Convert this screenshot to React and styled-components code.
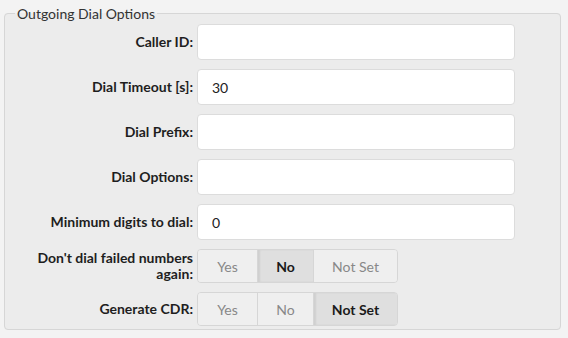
import React from "react";
import styled, { createGlobalStyle } from "styled-components";

const Global = createGlobalStyle`
  html, body { margin: 0; padding: 0; background: #f3f3f3; }
  body { font-family: Lato, "Open Sans", Arial, sans-serif; font-size: 14px; color: #222; }
  * { box-sizing: border-box; }
`;

const Page = styled.div`
  padding: 5px 7px 0 4px;
  width: 568px;
  height: 338px;
`;

const Fieldset = styled.fieldset`
  margin: 0;
  width: 557px;
  padding: 2px 0 3px 10px;
  border: 1px solid #d6d6d6;
  border-radius: 4px;
  background: #ececec;
`;

const Legend = styled.legend`
  padding: 0 2px;
  font-size: 14px;
  line-height: 17px;
  color: #333;
`;

const Grid = styled.div`
  display: grid;
  grid-template-columns: 178px 318px;
  column-gap: 4px;
  row-gap: 9px;
  align-items: center;
`;

const Label = styled.label`
  text-align: right;
  font-weight: 700;
  font-size: 14px;
  line-height: 16px;
  color: #1e1e1e;
`;

const Input = styled.input`
  width: 318px;
  height: 36px;
  border: 1px solid #dcdcdc;
  border-radius: 4px;
  background: #fff;
  padding: 0 14px;
  font-family: inherit;
  font-size: 14px;
  color: #222;
  outline: none;
`;

const Group = styled.div`
  display: flex;
  width: fit-content;
  height: ${(p) => p.$h}px;
  border: 1px solid #d6d6d6;
  border-radius: 4px;
  overflow: hidden;
`;

const Btn = styled.button`
  width: ${(p) => p.$w}px;
  height: 100%;
  border: none;
  border-left: ${(p) => (p.$first ? "none" : "1px solid #d6d6d6")};
  background: ${(p) => (p.$active ? "#dfdfdf" : "#efefef")};
  box-shadow: ${(p) => (p.$active ? "inset 2px 0 2px rgba(0,0,0,0.07)" : "none")};
  color: ${(p) => (p.$active ? "#1a1a1a" : "#888")};
  font-family: inherit;
  font-size: 14px;
  font-weight: ${(p) => (p.$active ? 700 : 400)};
  padding: 0;
  cursor: pointer;
`;

const options = [
  { label: "Yes", w: 59 },
  { label: "No", w: 56 },
  { label: "Not Set", w: 84 },
];

function Toggle({ value, h }) {
  return (
    <Group $h={h}>
      {options.map((o, i) => (
        <Btn key={o.label} $w={o.w} $first={i === 0} $active={o.label === value}>
          {o.label}
        </Btn>
      ))}
    </Group>
  );
}

export default function App() {
  return (
    <Page>
      <Global />
      <Fieldset>
        <Legend>Outgoing Dial Options</Legend>
        <Grid>
          <Label>Caller ID:</Label>
          <Input defaultValue="" />
          <Label>Dial Timeout [s]:</Label>
          <Input defaultValue="30" />
          <Label>Dial Prefix:</Label>
          <Input defaultValue="" />
          <Label>Dial Options:</Label>
          <Input defaultValue="" />
          <Label>Minimum digits to dial:</Label>
          <Input defaultValue="0" />
          <Label>Don't dial failed numbers again:</Label>
          <Toggle value="No" h={34} />
          <Label>Generate CDR:</Label>
          <Toggle value="Not Set" h={34} />
        </Grid>
      </Fieldset>
    </Page>
  );
}
